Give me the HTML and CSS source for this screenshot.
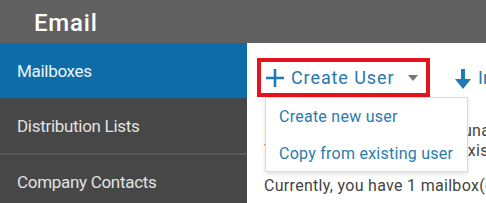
FILE: index.html
```html
<!DOCTYPE html>
<html>
<head>
<meta charset="utf-8">
<link rel="stylesheet" href="styles.css">
</head>
<body>
<header class="topbar"><span class="title">Email</span></header>
<div class="main">
  <nav class="sidebar">
    <div class="item active">Mailboxes</div>
    <div class="item">Distribution Lists</div>
    <div class="item">Company Contacts</div>
  </nav>
  <section class="content">
    <div class="toolbar">
      <div class="create-wrap">
        <button class="create-btn">
          <svg class="plus" width="20" height="20" viewBox="0 0 20 20"><path d="M10 1v18M1 10h18" stroke="#1f7ab8" stroke-width="2.6" fill="none"/></svg>
          <span class="btn-label">Create User</span>
          <span class="caret"></span>
        </button>
        <div class="menu">
          <div class="menu-item">Create new user</div>
          <div class="menu-item">Copy from existing user</div>
        </div>
      </div>
      <div class="import">
        <svg class="down" width="18" height="22" viewBox="0 0 18 22"><path d="M9 1v13" stroke="#1f7ab8" stroke-width="4" fill="none"/><path d="M1 11h16L9 21z" fill="#1f7ab8"/></svg>
        <span class="import-label">Import</span>
      </div>
    </div>
    <p class="text"><span class="lead l1">Here you can view and manage all mailboxes and</span>unassigned<br><span class="lead l2">You can also copy settings from an</span>existing</p>
    <p class="text">Currently, you have 1 mailbox(es) in your account.</p>
  </section>
</div>
</body>
</html>
```
FILE: styles.css
```css
* { box-sizing: border-box; }
html, body { margin: 0; padding: 0; }
body {
  width: 486px;
  height: 203px;
  overflow: hidden;
  font-family: Roboto, "Liberation Sans", sans-serif;
  background: #fff;
}
.topbar {
  height: 43px;
  background: #616161;
  display: flex;
  align-items: center;
  padding: 3px 0 0 34px;
}
.title {
  color: #fff;
  font-size: 24px;
  font-weight: 500;
  letter-spacing: 0.8px;
}
.main {
  display: flex;
  height: 160px;
}
.sidebar {
  width: 247px;
  flex: none;
  background: #474747;
}
.item {
  height: 56px;
  display: flex;
  align-items: center;
  padding-left: 17px;
  font-size: 17px;
  letter-spacing: -0.3px;
  color: #e2e2e2;
  border-bottom: 2px solid #575757;
}
.item.active {
  background: #0e6da8;
  color: #eef4fa;
  border-bottom: 1px solid #3b4a55;
}
.content {
  flex: 1;
  min-width: 0;
  padding: 15px 0 0 10px;
  overflow: hidden;
  position: relative;
}
.toolbar {
  display: flex;
  align-items: center;
  gap: 24px;
}
.create-wrap { position: relative; flex: none; }
.create-btn {
  display: flex;
  align-items: center;
  width: 173px;
  height: 39px;
  border: 4px solid #e3141d;
  background: #fff;
  padding: 0 0 0 4px;
  margin: 0;
  font-family: inherit;
  cursor: pointer;
}
.plus { flex: none; }
.btn-label {
  margin-left: 6px;
  font-size: 18px;
  color: #2a78a8;
  letter-spacing: 0.9px;
}
.caret {
  margin-left: 14px;
  width: 0;
  height: 0;
  border-left: 5px solid transparent;
  border-right: 5px solid transparent;
  border-top: 6px solid #777;
}
.menu {
  position: absolute;
  left: 8px;
  top: 39px;
  width: 203px;
  height: 75px;
  background: #fff;
  border: 1px solid #dadada;
  box-shadow: 0 2px 4px rgba(0,0,0,0.12);
  z-index: 2;
}
.menu-item {
  height: 37px;
  display: flex;
  align-items: center;
  padding-left: 13px;
  font-size: 16px;
  letter-spacing: 0.25px;
  color: #2b7bac;
}
.import {
  display: flex;
  align-items: center;
  gap: 6px;
  flex: none;
}
.down { margin-top: 2px; }
.import-label {
  font-size: 18px;
  color: #2a78a8;
}
.text {
  margin: 0;
  padding-left: 7px;
  font-size: 16px;
  letter-spacing: 0.3px;
  color: #444;
  white-space: nowrap;
  line-height: 20px;
}
.text:first-of-type { margin-top: 24px; }
.text + .text { margin-top: 15px; }
.lead {
  display: inline-block;
  overflow: hidden;
  vertical-align: bottom;
}
.l1 { width: 199px; }
.l2 { width: 195px; }
```
